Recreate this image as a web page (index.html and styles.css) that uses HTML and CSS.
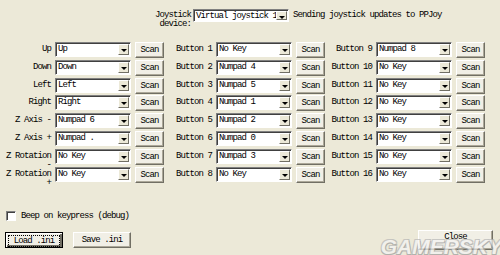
FILE: index.html
```html
<!DOCTYPE html>
<html lang="en">
<head>
    <meta charset="UTF-8"/>
    <title>PPJoy Keyboard Mapper</title>
    <link rel="stylesheet" href="styles.css">
</head>
<body>

<div class="dialog">

<!-- Device selector -->
<div class="device-row">
    <label class="device-label">Joystick device:</label>
    <div class="combo combo-device"><span class="combo-value">Virtual joystick 1</span><span class="combo-arrow"></span></div>
    <span class="status">Sending joystick updates to PPJoy</span>
</div>

<!-- Key mapping grid -->
<div class="mapping">
    <label class="map-label">Up</label>
    <div class="combo"><span class="combo-value">Up</span><span class="combo-arrow"></span></div>
    <button class="btn">Scan</button>
    <label class="map-label">Button 1</label>
    <div class="combo"><span class="combo-value">No Key</span><span class="combo-arrow"></span></div>
    <button class="btn">Scan</button>
    <label class="map-label">Button 9</label>
    <div class="combo"><span class="combo-value">Numpad 8</span><span class="combo-arrow"></span></div>
    <button class="btn">Scan</button>

    <label class="map-label">Down</label>
    <div class="combo"><span class="combo-value">Down</span><span class="combo-arrow"></span></div>
    <button class="btn">Scan</button>
    <label class="map-label">Button 2</label>
    <div class="combo"><span class="combo-value">Numpad 4</span><span class="combo-arrow"></span></div>
    <button class="btn">Scan</button>
    <label class="map-label">Button 10</label>
    <div class="combo"><span class="combo-value">No Key</span><span class="combo-arrow"></span></div>
    <button class="btn">Scan</button>

    <label class="map-label">Left</label>
    <div class="combo"><span class="combo-value">Left</span><span class="combo-arrow"></span></div>
    <button class="btn">Scan</button>
    <label class="map-label">Button 3</label>
    <div class="combo"><span class="combo-value">Numpad 5</span><span class="combo-arrow"></span></div>
    <button class="btn">Scan</button>
    <label class="map-label">Button 11</label>
    <div class="combo"><span class="combo-value">No Key</span><span class="combo-arrow"></span></div>
    <button class="btn">Scan</button>

    <label class="map-label">Right</label>
    <div class="combo"><span class="combo-value">Right</span><span class="combo-arrow"></span></div>
    <button class="btn">Scan</button>
    <label class="map-label">Button 4</label>
    <div class="combo"><span class="combo-value">Numpad 1</span><span class="combo-arrow"></span></div>
    <button class="btn">Scan</button>
    <label class="map-label">Button 12</label>
    <div class="combo"><span class="combo-value">No Key</span><span class="combo-arrow"></span></div>
    <button class="btn">Scan</button>

    <label class="map-label">Z Axis -</label>
    <div class="combo"><span class="combo-value">Numpad 6</span><span class="combo-arrow"></span></div>
    <button class="btn">Scan</button>
    <label class="map-label">Button 5</label>
    <div class="combo"><span class="combo-value">Numpad 2</span><span class="combo-arrow"></span></div>
    <button class="btn">Scan</button>
    <label class="map-label">Button 13</label>
    <div class="combo"><span class="combo-value">No Key</span><span class="combo-arrow"></span></div>
    <button class="btn">Scan</button>

    <label class="map-label">Z Axis +</label>
    <div class="combo"><span class="combo-value">Numpad .</span><span class="combo-arrow"></span></div>
    <button class="btn">Scan</button>
    <label class="map-label">Button 6</label>
    <div class="combo"><span class="combo-value">Numpad 0</span><span class="combo-arrow"></span></div>
    <button class="btn">Scan</button>
    <label class="map-label">Button 14</label>
    <div class="combo"><span class="combo-value">No Key</span><span class="combo-arrow"></span></div>
    <button class="btn">Scan</button>

    <label class="map-label">Z Rotation -</label>
    <div class="combo"><span class="combo-value">No Key</span><span class="combo-arrow"></span></div>
    <button class="btn">Scan</button>
    <label class="map-label">Button 7</label>
    <div class="combo"><span class="combo-value">Numpad 3</span><span class="combo-arrow"></span></div>
    <button class="btn">Scan</button>
    <label class="map-label">Button 15</label>
    <div class="combo"><span class="combo-value">No Key</span><span class="combo-arrow"></span></div>
    <button class="btn">Scan</button>

    <label class="map-label">Z Rotation +</label>
    <div class="combo"><span class="combo-value">No Key</span><span class="combo-arrow"></span></div>
    <button class="btn">Scan</button>
    <label class="map-label">Button 8</label>
    <div class="combo"><span class="combo-value">No Key</span><span class="combo-arrow"></span></div>
    <button class="btn">Scan</button>
    <label class="map-label">Button 16</label>
    <div class="combo"><span class="combo-value">No Key</span><span class="combo-arrow"></span></div>
    <button class="btn">Scan</button>
</div>

<!-- Debug option -->
<div class="beep-row">
    <span class="checkbox"></span>
    <span>Beep on keypress (debug)</span>
</div>

<!-- Bottom buttons -->
<div class="footer">
    <button class="btn btn-wide btn-default"><span class="focus-ring">Load .ini</span></button>
    <button class="btn btn-wide">Save .ini</button>
    <button class="btn btn-close">Close</button>
</div>

<div class="watermark">GAMERSKY</div>

</div>

</body>
</html>
```

FILE: styles.css
```css
body {
  margin: 0;
  background-color: #ece9d8;
  font-family: "Liberation Mono", monospace;
  font-size: 9px;
  letter-spacing: -0.9px;
  color: #000;
}
.dialog {
  position: relative;
  width: 500px;
  height: 255px;
  overflow: hidden;
}

/* Top device line */
.device-row {
  display: flex;
  align-items: flex-start;
  padding: 9px 0 0 150px;
  height: 42px;
  box-sizing: border-box;
}
.device-label {
  width: 41px;
  text-align: right;
  line-height: 9px;
  margin-top: 2px;
}
.device-row .combo-device {
  width: 96px;
  height: 13px;
  margin-left: 2px;
}
.status {
  margin-left: 4px;
  line-height: 13px;
}

/* Mapping grid */
.mapping {
  display: grid;
  grid-template-columns: 51px 76px 29px 44px 76px 29px 43px 76px 29px;
  grid-auto-rows: 15px;
  column-gap: 4px;
  row-gap: 2.8px;
}
.map-label {
  text-align: right;
  line-height: 9px;
  padding-top: 3px;
  white-space: normal;
}

/* Combo box */
.combo {
  display: flex;
  align-items: stretch;
  background: #fff;
  border: 1px solid;
  border-color: #808080 #fff #fff #808080;
  box-shadow: inset 1px 1px 0 #404040;
  padding: 1px;
  box-sizing: border-box;
  height: 15px;
}
.combo-value {
  flex: 1;
  padding-left: 1px;
  line-height: 11px;
  white-space: nowrap;
  overflow: hidden;
}
.combo-arrow {
  position: relative;
  width: 11px;
  background: #ece9d8;
  border: 1px solid;
  border-color: #fff #716f64 #716f64 #fff;
  box-sizing: border-box;
}
.combo-arrow::after {
  content: "";
  position: absolute;
  left: 2px;
  top: 4px;
  border-left: 3px solid transparent;
  border-right: 3px solid transparent;
  border-top: 3px solid #000;
}

/* Push buttons */
.btn {
  font: inherit;
  letter-spacing: inherit;
  color: #000;
  background: #f1efe6;
  border: 1px solid;
  border-color: #fff #716f64 #716f64 #fff;
  box-shadow: inset -1px -1px 0 #aca899;
  padding: 0;
  height: 16px;
  line-height: 12px;
}

/* Checkbox line */
.beep-row {
  display: flex;
  align-items: center;
  gap: 5px;
  margin: 29px 0 0 6px;
  height: 11px;
}
.checkbox {
  width: 10px;
  height: 10px;
  background: #fff;
  border: 1px solid;
  border-color: #808080 #fff #fff #808080;
  box-sizing: border-box;
  box-shadow: inset 1px 1px 0 #404040;
}

/* Footer buttons */
.footer {
  display: flex;
  align-items: flex-start;
  margin: 10px 0 0 5px;
}
.btn-wide {
  width: 58px;
  margin-right: 10px;
}
.btn-default {
  border: 1px solid #000;
  box-shadow: inset 1px 1px 0 #fff, inset -2px -2px 0 #716f64;
  padding: 2px;
}
.focus-ring {
  display: block;
  border: 1px dotted #000;
  line-height: 10px;
}
.btn-close {
  width: 75px;
  height: 20px;
  margin: -2px 7px 0 auto;
  padding-bottom: 6px;
}

/* Site watermark over the corner */
.watermark {
  position: absolute;
  right: -2px;
  bottom: -4px;
  font-family: "Liberation Sans", sans-serif;
  font-size: 21px;
  font-weight: bold;
  font-style: italic;
  letter-spacing: 0;
  color: #f4f4f4;
  text-shadow: 1px 1px 0 #9a9a9a, -1px -1px 0 #b8b8b8, 1px -1px 0 #b0b0b0, -1px 1px 0 #a0a0a0;
  opacity: 0.7;
}
```
